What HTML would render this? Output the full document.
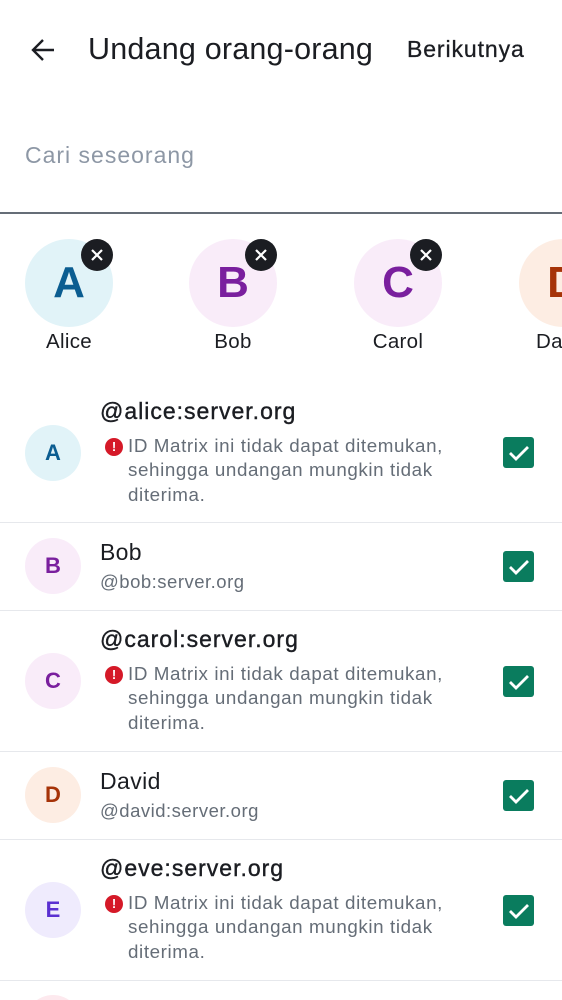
<!DOCTYPE html>
<html><head><meta charset="utf-8"><style>
*{margin:0;padding:0;box-sizing:border-box}
html{width:562px;height:1000px;overflow:hidden}
body{width:562px;height:1000px;overflow:hidden;background:#fff;font-family:"Liberation Sans",Roboto,sans-serif;color:#1b1d22;position:relative}
.a{position:absolute}
.t{white-space:nowrap;line-height:1}
.av{position:absolute;border-radius:50%;display:flex;align-items:center;justify-content:center;font-weight:bold}
.lbl{position:absolute;font-size:20.5px;width:120px;text-align:center;line-height:1;color:#1b1d22;letter-spacing:0.3px}
.div{position:absolute;left:0;width:562px;height:1px;background:#e6e8ec}
.cb{position:absolute;left:503px;width:31px;height:31px;border-radius:3px;background:#0a7c5e}
.nm{position:absolute;left:100px;font-size:22px;line-height:1;white-space:nowrap}
.nm.h{font-size:23px;letter-spacing:1px;-webkit-text-stroke:0.4px #1b1d22}
.sub{position:absolute;left:100px;font-size:18.5px;color:#656d77;line-height:1;white-space:nowrap;letter-spacing:0.5px}
.err{position:absolute;left:128px;font-size:18.8px;color:#656d77;line-height:1;white-space:nowrap;letter-spacing:0.6px}
.ei{position:absolute;left:105px;width:18px;height:18px;border-radius:50%;background:#d51928;color:#fff;font-size:13px;font-weight:bold;text-align:center;line-height:18px}
</style></head><body>
<svg class="a" style="left:30px;top:37px" width="26" height="26" viewBox="0 0 26 26"><path d="M24 13H4M13 3L3 13l10 10" fill="none" stroke="#1b1d22" stroke-width="2.4"/></svg>
<div class="a t" style="left:88px;top:34px;font-size:30.5px;letter-spacing:0.2px">Undang orang-orang</div>
<div class="a t" style="left:407px;top:38px;font-size:23px;letter-spacing:0.9px;-webkit-text-stroke:0.3px #1b1d22">Berikutnya</div>
<div class="a t" style="left:25px;top:144px;font-size:23px;color:#8d97a5;letter-spacing:1px">Cari seseorang</div>
<div class="a" style="left:0;top:212px;width:562px;height:2px;background:#656d77"></div>

<div class="av" style="left:25px;top:239px;width:88px;height:88px;background:#e1f3f8;color:#0b5d91;font-size:44px">A</div>
<div class="av" style="left:189px;top:239px;width:88px;height:88px;background:#f9ecf9;color:#7a1f9e;font-size:44px">B</div>
<div class="av" style="left:354px;top:239px;width:88px;height:88px;background:#f9ecf9;color:#7a1f9e;font-size:44px">C</div>
<div class="av" style="left:519px;top:239px;width:88px;height:88px;background:#fdede3;color:#a63308;font-size:44px">D</div>
<svg class="a" style="left:81px;top:239px" width="32" height="32"><circle cx="16" cy="16" r="16" fill="#1b1d22"/><path d="M11 11l10 10M21 11l-10 10" stroke="#fff" stroke-width="2.2"/></svg>
<svg class="a" style="left:245px;top:239px" width="32" height="32"><circle cx="16" cy="16" r="16" fill="#1b1d22"/><path d="M11 11l10 10M21 11l-10 10" stroke="#fff" stroke-width="2.2"/></svg>
<svg class="a" style="left:410px;top:239px" width="32" height="32"><circle cx="16" cy="16" r="16" fill="#1b1d22"/><path d="M11 11l10 10M21 11l-10 10" stroke="#fff" stroke-width="2.2"/></svg>
<div class="lbl" style="left:9px;top:332px">Alice</div>
<div class="lbl" style="left:173px;top:332px">Bob</div>
<div class="lbl" style="left:338px;top:332px">Carol</div>
<div class="lbl" style="left:503px;top:332px">David</div>

<div class="av" style="left:25px;top:425px;width:56px;height:56px;background:#e1f3f8;color:#0b5d91;font-size:22px">A</div>
<div class="nm h" style="top:400px">@alice:server.org</div>
<div class="ei" style="top:438px">!</div>
<div class="err" style="top:437px">ID Matrix ini tidak dapat ditemukan,</div>
<div class="err" style="top:461px">sehingga undangan mungkin tidak</div>
<div class="err" style="top:486px">diterima.</div>
<div class="cb" style="top:437px"><svg width="31" height="31"><path d="M7 16l6 6 12-12" fill="none" stroke="#fff" stroke-width="2.8"/></svg></div>
<div class="div" style="top:522px"></div>

<div class="av" style="left:25px;top:538px;width:56px;height:56px;background:#f9ecf9;color:#7a1f9e;font-size:22px">B</div>
<div class="nm" style="top:541px;font-size:23px;letter-spacing:0.3px">Bob</div>
<div class="sub" style="top:573px">@bob:server.org</div>
<div class="cb" style="top:551px"><svg width="31" height="31"><path d="M7 16l6 6 12-12" fill="none" stroke="#fff" stroke-width="2.8"/></svg></div>
<div class="div" style="top:610px"></div>

<div class="av" style="left:25px;top:653px;width:56px;height:56px;background:#f9ecf9;color:#7a1f9e;font-size:22px">C</div>
<div class="nm h" style="top:628px">@carol:server.org</div>
<div class="ei" style="top:666px">!</div>
<div class="err" style="top:665px">ID Matrix ini tidak dapat ditemukan,</div>
<div class="err" style="top:689px">sehingga undangan mungkin tidak</div>
<div class="err" style="top:714px">diterima.</div>
<div class="cb" style="top:666px"><svg width="31" height="31"><path d="M7 16l6 6 12-12" fill="none" stroke="#fff" stroke-width="2.8"/></svg></div>
<div class="div" style="top:751px"></div>

<div class="av" style="left:25px;top:767px;width:56px;height:56px;background:#fdede3;color:#a63308;font-size:22px">D</div>
<div class="nm" style="top:770px;font-size:23px;letter-spacing:0.4px">David</div>
<div class="sub" style="top:802px">@david:server.org</div>
<div class="cb" style="top:780px"><svg width="31" height="31"><path d="M7 16l6 6 12-12" fill="none" stroke="#fff" stroke-width="2.8"/></svg></div>
<div class="div" style="top:839px"></div>

<div class="av" style="left:25px;top:882px;width:56px;height:56px;background:#efebfd;color:#5a2fd1;font-size:22px">E</div>
<div class="nm h" style="top:857px">@eve:server.org</div>
<div class="ei" style="top:895px">!</div>
<div class="err" style="top:894px">ID Matrix ini tidak dapat ditemukan,</div>
<div class="err" style="top:918px">sehingga undangan mungkin tidak</div>
<div class="err" style="top:943px">diterima.</div>
<div class="cb" style="top:895px"><svg width="31" height="31"><path d="M7 16l6 6 12-12" fill="none" stroke="#fff" stroke-width="2.8"/></svg></div>
<div class="div" style="top:980px"></div>
<div class="a" style="left:25px;top:995px;width:56px;height:5px;overflow:hidden"><div style="width:56px;height:56px;border-radius:50%;background:#fde9ee"></div></div>
</body></html>
